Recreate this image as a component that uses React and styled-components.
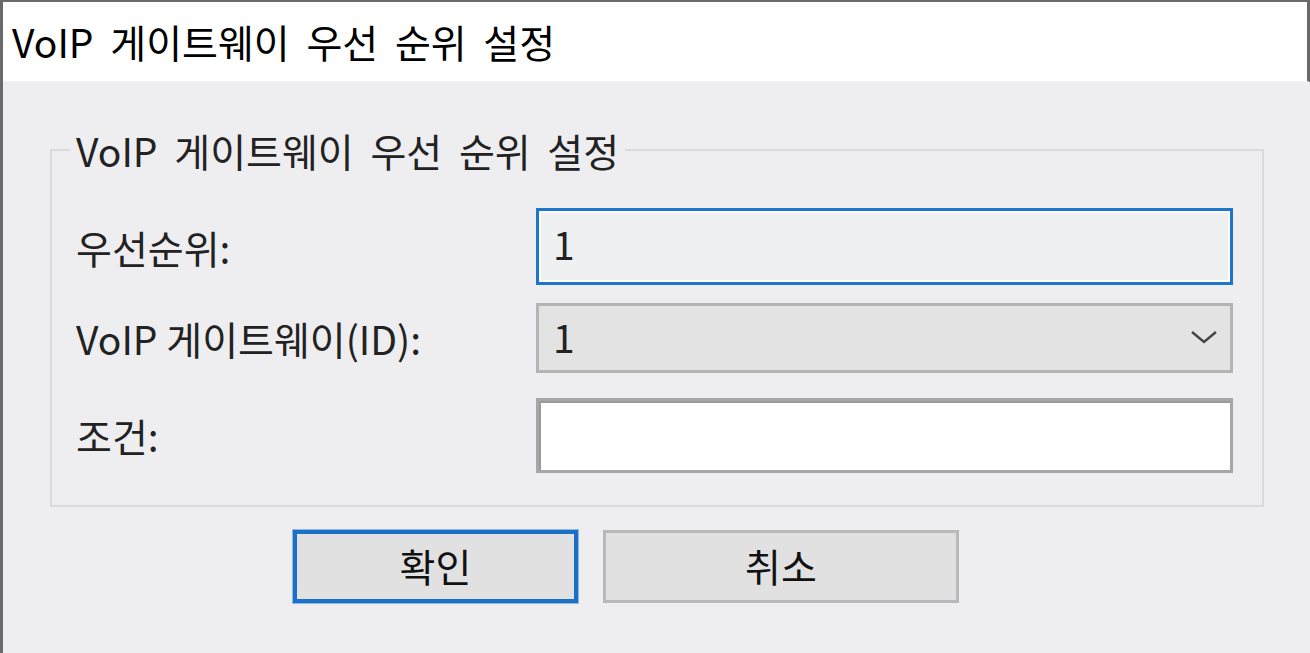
import React from 'react'
import styled, { createGlobalStyle, css } from 'styled-components'

const GlobalStyle = createGlobalStyle`
  html, body {
    margin: 0;
    padding: 0;
    background: #eeeef0;
  }
  * {
    box-sizing: border-box;
  }
`;

const Window = styled.div`
  width: 1310px;
  height: 653px;
  display: flex;
  flex-direction: column;
  background: #eeeef0;
  border-top: 2px solid #6a6a6a;
  border-left: 3px solid #6a6a6a;
  font-family: "Noto Sans CJK KR", "Noto Sans", sans-serif;
  font-size: 39px;
  color: #1a1a1a;
`;

const TitleBar = styled.div`
  height: 80px;
  flex: none;
  display: flex;
  align-items: center;
  padding: 0 0 2px 9px;
  background: #ffffff;
  border-right: 3px solid #6a6a6a;
  border-bottom: 1px solid #f2f2f2;
  word-spacing: 8px;
  color: #000;
`;

const Body = styled.div`
  flex: 1;
  display: flex;
  flex-direction: column;
  padding: 46px 46px 0 47px;
`;

const GroupBox = styled.fieldset`
  margin: 0;
  padding: 36px 27px 32px 24px;
  border: 2px solid #dadada;
  border-radius: 0;
  display: grid;
  grid-template-columns: 460px 697px;
  grid-template-rows: 77px 70px 82px;
  row-gap: 18px;
  align-items: center;
`;

const Legend = styled.legend`
  padding: 0 6px;
  margin-left: -6px;
  line-height: 44px;
  word-spacing: 8px;
  color: #222;
`;

const Label = styled.label`
  line-height: 44px;
  color: #222;
  ${p => p.$last && css`
    align-self: end;
    margin-bottom: 16px;
  `}
`;

const TextBox = styled.div`
  height: ${p => (p.$last ? '75px' : '100%')};
  align-self: ${p => (p.$last ? 'end' : 'stretch')};
  display: flex;
  align-items: flex-start;
  padding: 10px 14px;
  line-height: 44px;
  color: #222;
  background: ${p => (p.$focused ? '#eff0f1' : '#ffffff')};
  border: 3px solid ${p => (p.$focused ? '#1c76cc' : '#a6a6a6')};
  box-shadow: ${p => (p.$focused ? 'inset 0 0 0 2px #ffffff' : 'inset 2px 2px 0 0 #9a9a9a')};
`;

const Select = styled.div`
  height: 100%;
  display: flex;
  align-items: center;
  justify-content: space-between;
  padding: 0 12px 4px 14px;
  line-height: 44px;
  color: #222;
  background: #e3e3e3;
  border: 3px solid #b4b4b4;
`;

const Chevron = styled.svg`
  width: 28px;
  height: 16px;
  margin-top: 2px;
`;

const ButtonRow = styled.div`
  display: flex;
  gap: 25px;
  padding: 23px 0 0 243px;
`;

const Button = styled.button`
  width: ${p => p.$width}px;
  height: 73px;
  font-family: inherit;
  font-size: 39px;
  color: #111;
  background: #e1e1e1;
  border: ${p => (p.$primary ? '4px solid #1a70c6' : '3px solid #b9b9b9')};
  box-shadow: ${p => (p.$primary ? '0 0 0 1px #8fb8e3' : 'none')};
  border-radius: 0;
  padding: 0 0 4px;
`;

const App = () => {
  return (
    <>
      <GlobalStyle />
      <Window>
        <TitleBar>VoIP 게이트웨이 우선 순위 설정</TitleBar>
        <Body>
          <GroupBox>
            <Legend>VoIP 게이트웨이 우선 순위 설정</Legend>
            <Label>우선순위:</Label>
            <TextBox $focused>1</TextBox>
            <Label>VoIP 게이트웨이(ID):</Label>
            <Select>
              <span>1</span>
              <Chevron viewBox="0 0 28 16" fill="none">
                <path d="M2 3l12 10 12-10" stroke="#444" strokeWidth="2.4" />
              </Chevron>
            </Select>
            <Label $last>조건:</Label>
            <TextBox $last />
          </GroupBox>
          <ButtonRow>
            <Button $primary $width={285}>확인</Button>
            <Button $width={356}>취소</Button>
          </ButtonRow>
        </Body>
      </Window>
    </>
  )
}

export default App
